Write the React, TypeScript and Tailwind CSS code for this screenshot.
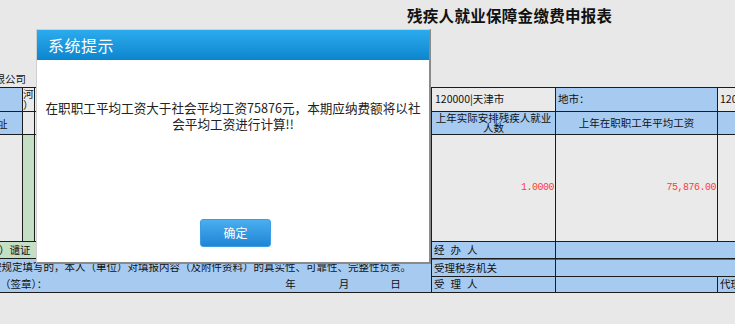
import React from 'react';

const blue = 'bg-[#a7caf0]';
const gray = 'bg-[#eaeaea]';
const green = 'bg-[#c4dfc4]';

function Dialog() {
  return (
    <div className="absolute left-[36px] top-[29px] w-[395px] h-[235px] flex flex-col bg-white border-t border-l border-r-2 border-b-2 border-[#cfcfcf] border-r-[#8a8a8a] border-b-[#8a8a8a]">
      <div className="h-[30px] flex items-center pl-[11px] bg-linear-to-b from-[#2cabee] to-[#0a85cd] text-white text-[16px] tracking-[0.5px]">
        系统提示
      </div>
      <div className="pt-[40px] text-center text-[12.6px] leading-[16px] text-[#222] whitespace-nowrap">
        <div>在职职工平均工资大于社会平均工资75876元，本期应纳费额将以社</div>
        <div>会平均工资进行计算!!</div>
      </div>
      <button className="mt-[87px] ml-[163px] w-[71px] h-[28px] rounded-[3px] bg-linear-to-b from-[#4aaef0] to-[#1e85d5] text-white text-[12px] border border-[#3c9de6]">
        确定
      </button>
    </div>
  );
}

export default function App() {
  return (
    <div className="relative w-[735px] h-[324px] overflow-hidden bg-[#e8e8e8] text-[10.5px] leading-none text-[#111] font-['Noto_Sans_CJK_SC','Liberation_Sans',sans-serif]">
      <div className="h-[32px] flex items-center pl-[407px] text-[15.5px] font-bold tracking-[0.3px] whitespace-nowrap">
        残疾人就业保障金缴费申报表
      </div>
      <div className="mt-[39px] h-[16px] flex items-center -ml-[16px] whitespace-nowrap">有限公司</div>

      <div className="grid grid-cols-[22px_11px_396px_123px_161px_1fr] grid-rows-[23px_22px_106px_16px_17px_15px] gap-px py-px bg-[#1c1c1c] whitespace-nowrap">
        {/* row 1 */}
        <div className={blue}></div>
        <div className={`${gray} flex flex-col pt-[1px] leading-[10.5px] overflow-hidden`}>
          <span>河</span>
          <span>）</span>
        </div>
        <div className={gray}></div>
        <div className={`${gray} flex items-center pl-[3px]`}>120000|天津市</div>
        <div className={`${blue} flex items-center pl-[2px]`}>地市：</div>
        <div className={`${gray} flex items-center pl-[2px] overflow-hidden`}>120000|天津市</div>

        {/* row 2 */}
        <div className={`${blue} flex items-end pb-[5px] overflow-hidden`}>
          <span className="-ml-[3px]">址</span>
        </div>
        <div className={gray}></div>
        <div className={gray}></div>
        <div className={`${blue} flex flex-col items-center justify-center leading-[10.5px]`}>
          <span>上年实际安排残疾人就业</span>
          <span>人数</span>
        </div>
        <div className={`${blue} flex items-center justify-center`}>上年在职职工年平均工资</div>
        <div className={blue}></div>

        {/* row 3 */}
        <div className={gray}></div>
        <div className={green}></div>
        <div className={gray}></div>
        <div className={`${gray} flex items-center justify-end pr-[1px] text-[#ff3b3b] text-[10px] tracking-[-0.5px] font-['Liberation_Mono',monospace]`}>
          1.0000
        </div>
        <div className={`${gray} flex items-center justify-end pr-[1px] text-[#ff3b3b] text-[10px] tracking-[-0.5px] font-['Liberation_Mono',monospace]`}>
          75,876.00
        </div>
        <div className={gray}></div>

        {/* row 4 */}
        <div className={`${green} col-span-3 flex items-center overflow-hidden`}>
          <span className="-ml-[1px]">）谴证</span>
        </div>
        <div className={`${blue} flex items-center pl-[2px] gap-[6px]`}>
          <span>经</span>
          <span>办</span>
          <span>人</span>
        </div>
        <div className={`${blue} col-span-2`}></div>

        {/* rows 5-6 left */}
        <div className={`${blue} col-span-3 row-span-2 flex flex-col overflow-hidden`}>
          <div className="h-[17px] flex items-center -ml-[9px]">
            按规定填写的，本人（单位）对填报内容（及附件资料）的真实性、可靠性、完整性负责。
          </div>
          <div className="h-[16px] flex items-center">
            <span>（签章）：</span>
            <span className="ml-[238px]">年</span>
            <span className="ml-[43px]">月</span>
            <span className="ml-[41px]">日</span>
          </div>
        </div>
        <div className={`${blue} flex items-center pl-[2px] border-t border-[#5d6878]`}>受理税务机关</div>
        <div className={`${blue} col-span-2 border-t border-[#5d6878]`}></div>

        {/* row 6 right */}
        <div className={`${blue} flex items-center pl-[2px] gap-[6px]`}>
          <span>受</span>
          <span>理</span>
          <span>人</span>
        </div>
        <div className={blue}></div>
        <div className={`${blue} flex items-center pl-[2px] overflow-hidden`}>代理人</div>
      </div>

      <Dialog />
    </div>
  );
}
